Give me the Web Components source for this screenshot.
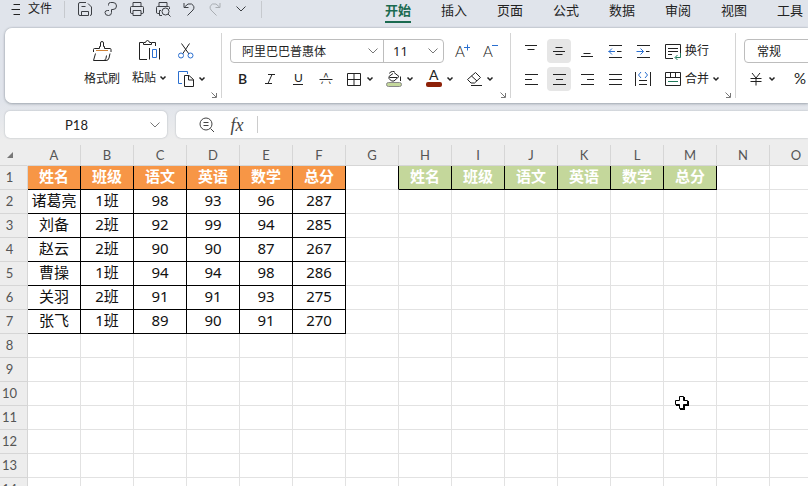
<!DOCTYPE html>
<html lang="zh-CN">
<head>
<meta charset="utf-8">
<title>表格</title>
<style>
  html, body { margin: 0; height: 100%; }
  body { font-family: "Noto Sans", "Noto Sans CJK SC", sans-serif; font-size: 12px; color: #222; overflow: hidden; }
</style>
</head>
<body>
<sheet-app></sheet-app>

<script>
const RESET = `
  *, *::before, *::after { box-sizing: border-box; }
  button { font: inherit; color: inherit; background: none; border: 0; margin: 0; padding: 0; display: flex; align-items: center; justify-content: center; }
`;

// name: [width, height, markup]
const ICONS = {
  menu: [12, 12, '<path d="M3.500 1.500H10M1.500 6.500H10M3.500 11.500H10"/>'],
  save: [16, 16, '<path d="M10.500 14.500H3Q1.500 14.500 1.500 13V3Q1.500 1.500 3 1.500H9M11 2.500L14.500 6V13Q14.500 14.500 13 14.500"/><path d="M4.500 14.500V10.500H11.500V14.500ZM4.500 5.500H8.500"/>'],
  out: [16, 16, '<path d="M5.500 4.500V3.500Q5.500 1.500 7.500 1.500H10Q13.500 1.500 13.500 5Q13.500 8.500 10 8.500H8.500V11.500Q8.500 14.500 5.500 14.500Q2 14.500 2 11.500Q2 9.500 4.500 9.500H6"/>'],
  print: [16, 16, '<path d="M4 5V1.500H12V5M4 12.500H2.500Q1.500 12.500 1.500 11V6.500Q1.500 5.500 2.500 5.500H13.500Q14.500 5.500 14.500 6.500V11Q14.500 12.500 13.500 12.500H12M4 9.500H12V14.500H4Z"/>'],
  preview: [16, 16, '<path d="M4 5V1.500H12V5M4 12.500H2.500Q1.500 12.500 1.500 11V6.500Q1.500 5.500 2.500 5.500H13.500Q14.500 5.500 14.500 6.500V8M6 9.500H4.500V14.500H7"/><circle cx="10.500" cy="10.500" r="3.500"/><path d="M13 13L15.500 15.500"/>'],
  undo: [16, 16, '<path d="M3 2V6.500H7.500M3.500 6Q7 1.500 10.500 3Q14.500 5.500 12 9L6.500 14.500"/>'],
  redo: [16, 16, '<path stroke="#a9adb2" d="M13 2V6.500H8.500M12.500 6Q9 1.500 5.500 3Q1.500 5.500 4 9L9.500 14.500"/>'],
  chevron: [10, 6, '<path d="M0.500 0.500L5 5L9.500 0.500"/>'],
  caret: [6, 4, '<path stroke-width="1.500" d="M0.500 0.500L3 3L5.500 0.500"/>'],
  launcher: [6, 6, '<path stroke="#777" d="M0.500 0.500L5 5M5.500 1V5.500H1"/>'],
  brush: [20, 22, '<path d="M1.500 12V9.500Q1.500 8.500 2.500 8.500H7.500V6.500H8.500V3Q8.500 1.500 10 1.500Q11.500 1.500 11.500 3V6.500H12.500V8.500H18Q19 8.500 19 9.500V12M3.500 13.500L1.500 20.500H14Q16.500 20.500 17 18L18 13.500M14.500 15.500Q14.500 18.500 12.500 20.500"/><path stroke="#cf8237" d="M4 10.500H16"/>'],
  paste: [22, 22, '<path d="M5 3.500H1.500V20.500H9M14 3.500H17.500V7M5.500 5.500V3.500H7.500Q8 1.500 9.500 1.500Q11 1.500 11.500 3.500H13.500V5.500Z"/><path stroke="#2a6fd0" d="M14.500 10.500H18.500V18.500H14.500Z"/><path d="M11.500 9V20.500M21.500 9V20.500"/>'],
  cut: [18, 18, '<path d="M4.500 1.500L12 12M12.500 1.500L5.500 12"/><g stroke="#2a6fd0"><circle cx="4" cy="13.500" r="2.500"/><circle cx="13.500" cy="13.500" r="2.500"/></g>'],
  copy: [18, 18, '<path stroke="#2a6fd0" d="M5 13.500H1.500V1.500H10.500V4"/><path d="M7.500 5.500H12L16.500 9.500V16.500H7.500ZM11.500 5.500V10H16.500"/>'],
  bigger: [16, 16, '<text x="1" y="14" font-size="15" font-weight="300">A</text><path stroke="#2a6fd0" d="M10 4.500H16M13.500 1.500V7.500"/>'],
  smaller: [16, 16, '<text x="1" y="14" font-size="15" font-weight="300">A</text><path stroke="#2a6fd0" d="M10 2.500H16"/>'],
  bold: [12, 12, '<text x="2" y="11" font-size="14" font-weight="600">B</text>'],
  italic: [12, 12, '<path d="M4 1.500H11M1 10.500H8M8 1.500L4 10.500"/>'],
  underline: [12, 14, '<text x="2" y="10" font-size="12">U</text><path d="M1 12.500H11"/>'],
  strike: [14, 14, '<text x="2" y="12" font-size="15" font-weight="300">A</text><path stroke="#fff" stroke-width="4" d="M0 7.500H14"/><path d="M0.500 7.500H13.500"/>'],
  borders: [14, 14, '<path d="M0.500 1.500H13.500V13.500H0.500ZM7 1.500V13.500M0.500 7.500H13.500"/>'],
  fill: [18, 18, '<path d="M4.500 3.500Q5 1.500 7.500 1.500H9.500M9 2.500L14 6.500L9 11H6.500L4 8.500V6.500L8 3.500M4.500 7.500H12M15.500 6.500V11"/><rect x="1.500" y="12.500" width="15" height="4" rx="2" fill="#c4d79b" stroke="#888"/>'],
  color: [18, 18, '<text x="4" y="10" font-size="14">A</text><rect x="1" y="12" width="16" height="5" rx="2" fill="#8e2108" stroke="none"/>'],
  eraser: [18, 16, '<path d="M10.500 1.500L15.500 6.500L9.500 12H6L2.500 8.500ZM6.500 5L12 10M6 14.500H17"/>'],
  top: [14, 14, '<path d="M1 1.500H13M3.500 5.500H10.500"/>'],
  middle: [14, 14, '<path d="M3.500 3.500H10.500M1 7.500H13M3.500 10.500H10.500"/>'],
  bottom: [14, 14, '<path d="M3.500 9.500H10.500M1 12.500H13"/>'],
  outdent: [14, 14, '<path d="M1 1.500H14M1 13.500H14M9 7.500H13.500"/><path stroke="#2a6fd0" d="M0.500 7.500H7M4 4.500L1 7.500L4 10.500"/>'],
  indent: [14, 14, '<path d="M1 1.500H14M1 13.500H14M10 7.500H13.500"/><path stroke="#2a6fd0" d="M0.500 7.500H7.500M4.500 4.500L7.500 7.500L4.500 10.500"/>'],
  left: [14, 12, '<path d="M1 1.500H14M1 6.500H8M1 11.500H14"/>'],
  center: [14, 12, '<path d="M1 1.500H14M4 6.500H11M1 11.500H14"/>'],
  right: [14, 12, '<path d="M1 1.500H14M7 6.500H14M1 11.500H14"/>'],
  justify: [14, 12, '<path d="M1 1.500H14M1 6.500H14M1 11.500H14"/>'],
  spread: [16, 16, '<path d="M0.500 1V15M15.500 1V15M4 9.500H12M4 13.500H12"/><path stroke="#2a6fd0" d="M6 1L3.500 4L6 7M10 1L12.500 4L10 7"/>'],
  wrap: [16, 16, '<path d="M8 15.500H0.500V1.500H15.500V10M3 5.500H13M3 8.500H13M3 11.500H7"/><path stroke="#217a5b" d="M15.500 10V14.500H10.500M12.500 12L10 14.500L12.500 17"/>'],
  merge: [16, 16, '<path d="M0.500 1.500H15.500V14.500H0.500ZM0.500 6.500H15.500M5.500 1.500V6.500M10.500 1.500V6.500"/><path stroke="#217a5b" d="M3 10.500H13"/>'],
  yen: [12, 14, '<path d="M2 1L6 6L10 1M6 6V13.500M0.500 6.500H11.500M0.500 9.500H11.500"/>'],
  percent: [14, 14, '<text x="1" y="12" font-size="15">%</text>'],
  zoom: [16, 16, '<circle cx="7" cy="7" r="6"/><path d="M11.500 11.500L15 15M4.500 5.500H9.500M4.500 8.500H9.500"/>'],
  corner: [8, 8, '<path fill="#777" stroke="none" d="M7 1V7H1Z"/>'],
  cross: [18, 18, '<path d="M7 3H12V7H16V12H12V16H7V12H3V7H7Z" fill="#000" stroke="none"/><path d="M6.500 2.500H10.500V6.500H14.500V10.500H10.500V14.500H6.500V10.500H2.500V6.500H6.500Z" fill="#fff" stroke="#000"/>'],
};

class UiIcon extends HTMLElement {
  connectedCallback() {
    const [w, h, art] = ICONS[this.getAttribute('name')];
    const root = this.shadowRoot || this.attachShadow({ mode: 'open' });
    root.innerHTML = `<style>:host{display:flex;justify-content:center;flex:none}svg{display:block;overflow:visible}text{fill:currentColor;stroke:none;font-family:Lato,"Noto Sans",sans-serif}</style>
      <svg width="${w}" height="${h}" viewBox="0 0 ${w} ${h}" fill="none" stroke="currentColor" aria-hidden="true">${art}</svg>`;
  }
}
customElements.define('ui-icon', UiIcon);

class ToolButton extends HTMLElement {
  connectedCallback() {
    const a = n => this.getAttribute(n);
    const root = this.shadowRoot || this.attachShadow({ mode: 'open' });
    root.innerHTML = `<style>${RESET}
      :host { display: block; flex: none; }
      button { height: 24px; min-width: 24px; gap: 4px; border-radius: 4px; white-space: nowrap; }
      button:hover, button[aria-pressed="true"] { background: #e6e6e6; }
      :host([drop]) button { width: 40px; gap: 1px; justify-content: flex-start; }
      :host([drop]) button > ui-icon { width: 24px; }
      :host([text]) button { width: auto; gap: 4px; padding: 0 2px; }
      :host([text]) button > ui-icon { width: auto; }
      :host([quick]) button { width: 26px; height: 18px; }
      :host([stacked]) button { flex-direction: column; height: 52px; gap: 5px; width: auto; }
      .line { display: flex; align-items: center; gap: 4px; height: 24px; line-height: 24px; }
      :host([drop]:not([text])) .line { gap: 0; }
      </style>
      <button type="button" aria-label="${a('label')}" ${this.hasAttribute('on') ? 'aria-pressed="true"' : ''}>
        <ui-icon name="${a('icon')}"></ui-icon>
        ${this.hasAttribute('text') || this.hasAttribute('drop') ? `<span class="line"><slot></slot>${this.hasAttribute('drop') ? '<ui-icon name="caret"></ui-icon>' : ''}</span>` : ''}
      </button>`;
  }
}
customElements.define('tool-button', ToolButton);

class ComboBox extends HTMLElement {
  connectedCallback() {
    const root = this.shadowRoot || this.attachShadow({ mode: 'open' });
    root.innerHTML = `<style>${RESET}
      :host { display: flex; align-items: center; position: relative; height: 22px; }
      select { appearance: none; font: inherit; color: inherit; background: none; border: 0; outline: 0; width: 100%; height: 22px; padding: 0 24px 0 var(--inset, 11px); }
      ui-icon { position: absolute; right: 5px; color: #777; pointer-events: none; }
      </style>
      <select aria-label="${this.getAttribute('label')}"><option>${this.getAttribute('value')}</option></select>
      <ui-icon name="chevron"></ui-icon>`;
  }
}
customElements.define('combo-box', ComboBox);

class RibbonGroup extends HTMLElement {
  connectedCallback() {
    const root = this.shadowRoot || this.attachShadow({ mode: 'open' });
    root.innerHTML = `<style>${RESET}
      :host { display: flex; flex: none; position: relative; height: 65px; padding: 6px 0 0; border-right: 1px solid #d4d4d4; }
      :host([last]) { border: 0; }
      .launch { position: absolute; right: 4px; bottom: 0; }
      </style><slot></slot>
      ${this.hasAttribute('last') ? '' : '<button class="launch" type="button" aria-label="更多设置"><ui-icon name="launcher"></ui-icon></button>'}`;
  }
}
customElements.define('ribbon-group', RibbonGroup);

class TopBar extends HTMLElement {
  connectedCallback() {
    const quick = [['save', '保存'], ['out', '输出'], ['print', '打印'], ['preview', '打印预览'], ['undo', '撤销'], ['redo', '恢复'], ['chevron', '更多']];
    const tabs = ['开始', '插入', '页面', '公式', '数据', '审阅', '视图', '工具'];
    const root = this.shadowRoot || this.attachShadow({ mode: 'open' });
    root.innerHTML = `<style>${RESET}
      :host { display: flex; align-items: flex-start; height: 28px; overflow: hidden; padding-left: 10px; }
      .file { height: 18px; gap: 6px; line-height: 18px; white-space: nowrap; flex: none; }
      .rule { width: 1px; height: 17px; margin: 1px 0 0; background: #c6c9ce; flex: none; }
      .a { margin-left: 12px; margin-right: 7px; } .b { margin-left: 7px; }
      .quick { display: flex; flex: none; color: #3c3f44; }
      nav { display: flex; flex: none; margin-left: 108px; }
      nav button { width: 56px; height: 23px; font-size: 13px; line-height: 20px; align-items: flex-start; }
      nav span { height: 23px; border-bottom: 2px solid transparent; }
      nav [aria-current] { font-weight: 700; color: #1b6a50; }
      nav [aria-current] span { border-color: #1b6a50; }
      </style>
      <button class="file" type="button"><ui-icon name="menu"></ui-icon>文件</button>
      <div class="rule a"></div>
      <div class="quick">${quick.map(q => `<tool-button quick icon="${q[0]}" label="${q[1]}"></tool-button>`).join('')}</div>
      <div class="rule b"></div>
      <nav>${tabs.map((t, i) => `<button type="button" ${i ? '' : 'aria-current="page"'}><span>${t}</span></button>`).join('')}</nav>`;
  }
}
customElements.define('top-bar', TopBar);

class RibbonPanel extends HTMLElement {
  connectedCallback() {
    const b = (icon, label, extra = '', text = '') => `<tool-button icon="${icon}" label="${label}" ${extra}>${text}</tool-button>`;
    const root = this.shadowRoot || this.attachShadow({ mode: 'open' });
    root.innerHTML = `<style>${RESET}
      :host { display: block; padding-left: 5px; }
      .card { display: flex; background: #fff; border-radius: 7px 0 0 7px; padding: 5px 0; overflow: hidden; }
      .shade { border-radius: 7px 0 0 7px; box-shadow: 0 0 2px #9aa0a8, 0 1px 3px #aab0b8; }
      .rows { display: flex; flex-direction: column; gap: 4px; }
      .row { display: flex; align-items: center; gap: 4px; height: 24px; }
      .clip { display: flex; align-items: flex-start; padding-left: 77px; width: 216px; }
      .big { display: flex; gap: 8px; margin-right: 6px; }
      .font { padding-left: 8px; width: 288px; }
      .four { display: flex; gap: 4px; }
      .drops { display: flex; }
      .fields { display: flex; border: 1px solid #bdbdbd; border-radius: 4px; width: 214px; margin-right: 2px; }
      .fields combo-box { flex: 1; }
      .fields .size { flex: 0 0 60px; border-left: 1px solid #bdbdbd; --inset: 9px; font-size: 13px; }
      .align { padding-left: 8px; width: 224px; }
      .num { padding-left: 8px; width: 200px; }
      .num .fields { width: 180px; --inset: 12px; }
      .pad { margin-left: 4px; }
      </style>
      <div class="shade"><div class="card">
        <ribbon-group><div class="clip">
          <div class="big">
            ${b('brush', '格式刷', 'stacked text', '格式刷')}
            ${b('paste', '粘贴', 'stacked text drop', '粘贴')}
          </div>
          <div class="rows">${b('cut', '剪切')}${b('copy', '复制', 'drop')}</div>
        </div></ribbon-group>
        <ribbon-group><div class="font rows">
          <div class="row">
            <div class="fields"><combo-box label="字体" value="阿里巴巴普惠体"></combo-box><combo-box class="size" label="字号" value="11"></combo-box></div>
            ${b('bigger', '增大字号')}${b('smaller', '减小字号')}
          </div>
          <div class="row">
            <div class="four">${b('bold', '加粗')}${b('italic', '倾斜')}${b('underline', '下划线')}${b('strike', '删除线')}</div>
            <div class="drops">${b('borders', '边框', 'drop')}${b('fill', '填充', 'drop')}${b('color', '字体颜色', 'drop')}${b('eraser', '清除', 'drop')}</div>
          </div>
        </div></ribbon-group>
        <ribbon-group><div class="align rows">
          <div class="row">${b('top', '顶端对齐')}${b('middle', '垂直居中', 'on')}${b('bottom', '底端对齐')}${b('outdent', '减少缩进')}${b('indent', '增加缩进')}${b('wrap', '换行', 'text class="pad"', '换行')}</div>
          <div class="row">${b('left', '左对齐')}${b('center', '水平居中', 'on')}${b('right', '右对齐')}${b('justify', '两端对齐')}${b('spread', '分散对齐')}${b('merge', '合并', 'text drop class="pad"', '合并')}</div>
        </div></ribbon-group>
        <ribbon-group last><div class="num rows">
          <div class="row"><div class="fields"><combo-box label="数字格式" value="常规"></combo-box></div></div>
          <div class="row">${b('yen', '货币', 'drop')}${b('percent', '百分比')}</div>
        </div></ribbon-group>
      </div></div>`;
  }
}
customElements.define('ribbon-panel', RibbonPanel);

class FormulaBar extends HTMLElement {
  connectedCallback() {
    const root = this.shadowRoot || this.attachShadow({ mode: 'open' });
    root.innerHTML = `<style>${RESET}
      :host { display: flex; gap: 9px; padding: 8px 0 7px 5px; }
      .box { display: flex; align-items: center; height: 27px; background: #fff; border-radius: 5px; box-shadow: 0 0 2px #a9aeb4; }
      .name { flex: none; width: 162px; padding-right: 7px; color: #777; }
      .formula { flex: 1; min-width: 0; border-radius: 5px 0 0 5px; padding-left: 19px; }
      input { font: inherit; border: 0; outline: 0; background: none; color: #222; min-width: 0; flex: 1; padding: 0; }
      .name input { text-align: center; padding-right: 2px; font: 13px/20px Lato, "Noto Sans", sans-serif; }
      button { width: 24px; height: 24px; color: #444; }
      .fx { font: italic 18px/20px "Liberation Serif", serif; margin-left: 6px; }
      .rule { width: 1px; height: 17px; background: #ccc; margin: 0 6px 0 8px; }
      </style>
      <div class="box name"><input aria-label="名称框" value="P18"><ui-icon name="chevron"></ui-icon></div>
      <div class="box formula"><button type="button" aria-label="浏览公式结果"><ui-icon name="zoom"></ui-icon></button><button class="fx" type="button" aria-label="插入函数">fx</button><div class="rule"></div><input aria-label="编辑栏"></div>`;
  }
}
customElements.define('formula-bar', FormulaBar);

class SheetGrid extends HTMLElement {
  connectedCallback() {
    const cols = [...'ABCDEFGHIJKLMNO'];
    const head = ['姓名', '班级', '语文', '英语', '数学', '总分'];
    const data = [
      ['诸葛亮', '1班', 98, 93, 96, 287], ['刘备', '2班', 92, 99, 94, 285], ['赵云', '2班', 90, 90, 87, 267],
      ['曹操', '1班', 94, 94, 98, 286], ['关羽', '2班', 91, 91, 93, 275], ['张飞', '1班', 89, 90, 91, 270],
    ];
    const cell = (r, c) => {
      if (r === 0 && c < 6) return `<td class="o k">${head[c]}</td>`;
      if (r === 0 && c === 6) return '<td class="edge"></td>';
      if (r === 0 && c > 6 && c < 13) return `<td class="g k">${head[c - 7]}</td>`;
      if (r > 0 && r < 7 && c < 6) return `<td class="k">${data[r - 1][c]}</td>`;
      return '<td></td>';
    };
    const root = this.shadowRoot || this.attachShadow({ mode: 'open' });
    root.innerHTML = `<style>${RESET}
      :host { display: block; position: relative; flex: 1; min-height: 0; overflow: hidden; background: #fff; }
      table { border-collapse: separate; border-spacing: 0; table-layout: fixed; width: 823px; }
      .rh { width: 28px; } .ch { width: 53px; }
      tr { height: 24px; } thead tr { height: 21px; }
      th, td { padding: 0; text-align: center; border-right: 1px solid #e2e2e2; border-bottom: 1px solid #e2e2e2; white-space: nowrap; }
      th { background: #ededed; font: 13px/20px Lato, "Noto Sans", sans-serif; color: #555; border-color: #d6d6d6; }
      tbody th { padding: 0 8px 1px 0; }
      thead th:first-child { border-right-color: #ededed; }
      thead th:first-child ui-icon { margin-right: 7px; }
      td { font-size: 15px; line-height: 20px; padding-bottom: 3px; color: #111; }
      .k { border-color: #000; }
      .edge { border-right-color: #000; }
      .o, .g { font-weight: 700; color: #fff; }
      .o { background: #f79646; } .g { background: #c4d79b; }
      .pointer { position: absolute; left: 673px; top: 249px; }
      </style>
      <table><colgroup><col class="rh">${cols.map(() => '<col class="ch">').join('')}</colgroup>
      <thead><tr><th scope="col"><ui-icon name="corner"></ui-icon></th>${cols.map(c => `<th scope="col">${c}</th>`).join('')}</tr></thead>
      <tbody>${Array.from({ length: 14 }, (_, r) => `<tr><th scope="row">${r + 1}</th>${cols.map((_, c) => cell(r, c)).join('')}</tr>`).join('')}</tbody></table>
      <ui-icon class="pointer" name="cross"></ui-icon>`;
  }
}
customElements.define('sheet-grid', SheetGrid);

class SheetApp extends HTMLElement {
  connectedCallback() {
    const root = this.shadowRoot || this.attachShadow({ mode: 'open' });
    root.innerHTML = `<style>
      :host { display: flex; flex-direction: column; height: 100vh; overflow: hidden; background: linear-gradient(#e0e4eb 0, #e0e4eb 100px, #ededed 140px); }
      top-bar, ribbon-panel, formula-bar { flex: none; }
      </style>
      <top-bar></top-bar><ribbon-panel></ribbon-panel><formula-bar></formula-bar><sheet-grid></sheet-grid>`;
  }
}
customElements.define('sheet-app', SheetApp);
</script>
</body>
</html>
